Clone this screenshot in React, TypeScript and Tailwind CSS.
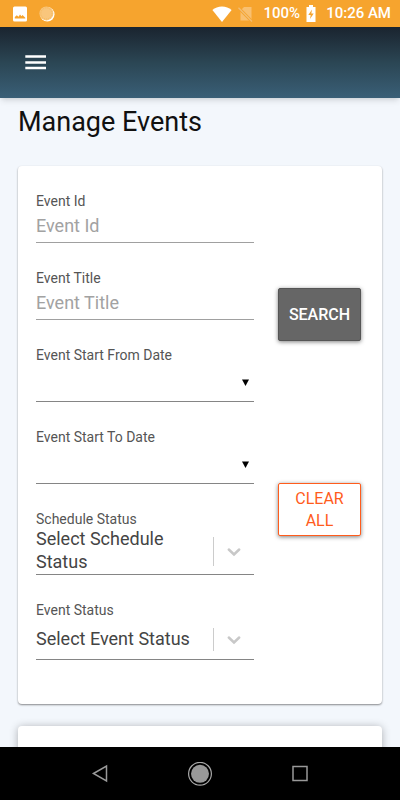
import { ReactNode } from 'react'

interface FieldProps {
  id: string
  label: string
  children: ReactNode
}

function Field({ id, label, children }: FieldProps) {
  return (
    <div className="flex flex-col">
      <label htmlFor={id} className="text-sm leading-4 text-[#555]">
        {label}
      </label>
      {children}
    </div>
  )
}

function TextField({ id, label }: { id: string; label: string }) {
  return (
    <Field id={id} label={label}>
      <input
        id={id}
        type="text"
        placeholder={label}
        className="h-[34px] w-full border-b border-[#a0a0a0] text-lg text-[#333] outline-none placeholder:text-[#a2a2a2]"
      />
    </Field>
  )
}

function DateField({ id, label }: { id: string; label: string }) {
  return (
    <Field id={id} label={label}>
      <div className="relative">
        <input
          id={id}
          type="date"
          className="block h-[39px] w-full border-b border-[#858585] text-lg outline-none [&::-webkit-calendar-picker-indicator]:opacity-0 [&::-webkit-datetime-edit]:opacity-0"
        />
        <svg
          viewBox="0 0 7 7"
          className="pointer-events-none absolute top-4 right-[5px] h-[7px] w-[7px]"
          fill="#000"
          aria-hidden="true"
        >
          <path d="M0 0.5h7L3.5 7z" />
        </svg>
      </div>
    </Field>
  )
}

function SelectField({
  id,
  label,
  placeholder,
}: {
  id: string
  label: string
  placeholder: string
}) {
  return (
    <Field id={id} label={label}>
      <div className="relative flex border-b border-[#858585]">
        <select
          id={id}
          className="min-h-[41px] w-full appearance-none pr-11 pb-px text-lg leading-[23px] whitespace-normal text-[#444] outline-none"
        >
          <option>{placeholder}</option>
        </select>
        <div className="pointer-events-none absolute inset-y-0 right-0 flex items-stretch pt-2.5 pb-2">
          <span className="w-px bg-[#ccc]" />
          <span className="flex w-10 items-center justify-center">
            <svg
              viewBox="0 0 20 20"
              className="h-5 w-5"
              fill="none"
              stroke="#c8c8c8"
              strokeWidth="2.5"
              strokeLinecap="round"
              aria-hidden="true"
            >
              <path d="M4.800 7.500L10 12.500l5.200-5" />
            </svg>
          </span>
        </div>
      </div>
    </Field>
  )
}

function StatusBar() {
  return (
    <div className="flex h-[27px] shrink-0 items-center justify-between bg-[#f6a42e] pr-[9px] pl-3 text-white">
      <div className="flex items-center gap-[11px]">
        <svg viewBox="0 0 16 16" className="h-4 w-4" aria-hidden="true">
          <rect x="1" y="0.500" width="14" height="15" rx="1.5" fill="#fff" />
          <path d="M2.800 12.500V11l2-1.800 1.700 1.600L8 8.500l1.500 1.800 1-1.300 2.800 2.700v0.800z" fill="#f6a42e" />
        </svg>
        <svg viewBox="0 0 16 16" className="h-4 w-4" aria-hidden="true">
          <circle cx="8.3" cy="8.3" r="7.2" fill="#fff" />
          <circle cx="7.4" cy="7.4" r="7" fill="#f9c67c" />
          <circle cx="7.4" cy="7.4" r="5.6" fill="none" stroke="#f6b95e" strokeDasharray="1 1" />
        </svg>
      </div>
      <div className="flex items-center text-[15px] font-medium">
        <svg viewBox="0 0 20 16" className="h-4 w-5" fill="#fff" aria-hidden="true">
          <path d="M10 16L0.4 4.1C3 1.700 6.200 0.500 10 0.500s7 1.200 9.600 3.600z" />
        </svg>
        <svg viewBox="0 0 16 16" className="ml-1.5 h-4 w-4" aria-hidden="true">
          <path d="M6 1h7.500v13.500H2.500V4.500z" fill="#f9c070" />
          <path d="M0.500 1.800L14 15.500" stroke="#f6a42e" strokeWidth="3" />
          <path d="M0.500 1.800L14 15.500" stroke="#f2bd74" strokeWidth="1.300" />
        </svg>
        <span className="ml-2.5">100%</span>
        <svg viewBox="0 0 10 17" className="ml-1.5 h-[17px] w-2.5" aria-hidden="true">
          <path d="M3 0h4v2h2.500v15h-9V2H3z" fill="#fff" />
          <path d="M6 4.500L2.300 10h2.400l-0.700 4L7.700 8.500H5.300z" fill="#f6a42e" />
        </svg>
        <span className="ml-2.5">10:26 AM</span>
      </div>
    </div>
  )
}

function NavigationBar() {
  return (
    <nav className="flex h-[53px] shrink-0 items-center justify-center gap-[76px] bg-black">
      <button type="button" aria-label="Back">
        <svg viewBox="0 0 24 24" className="h-6 w-6" fill="none" stroke="#999" strokeWidth="1.500">
          <path d="M5.500 11.500L18.500 4v15z" />
        </svg>
      </button>
      <button type="button" aria-label="Home">
        <svg viewBox="0 0 24 24" className="h-6 w-6">
          <circle cx="12" cy="11.800" r="11.400" fill="none" stroke="#aaa" strokeWidth="1.200" />
          <circle cx="12" cy="11.800" r="9" fill="#999" />
        </svg>
      </button>
      <button type="button" aria-label="Recent apps">
        <svg viewBox="0 0 24 24" className="h-6 w-6" fill="none" stroke="#999" strokeWidth="1.500">
          <rect x="5" y="4.500" width="14" height="14" />
        </svg>
      </button>
    </nav>
  )
}

export default function App() {
  return (
    <div className="flex h-screen flex-col bg-[#f3f7fc] font-[Roboto,sans-serif]">
      <StatusBar />
      <header className="z-10 flex h-[71px] shrink-0 items-center bg-linear-to-b from-[#1a242f] via-[#2b4654] to-[#3a5f77] px-6 shadow-md">
        <button type="button" aria-label="Open menu">
          <svg viewBox="0 0 24 24" className="h-6 w-6" fill="#fff">
            <path d="M1.300 4.300h20.700v2.500h-20.700zM1.300 10.200h20.700v2.500h-20.700zM1.300 15.800h20.700v2.500h-20.700z" />
          </svg>
        </button>
      </header>

      <main className="flex-1 overflow-hidden px-[18px] pt-1.5">
        <h1 className="text-[27px] leading-9 text-[#111]">Manage Events</h1>

        <form className="mt-[26px] flex gap-6 rounded bg-white pt-[27px] pr-[21px] pb-11 pl-[18px] shadow-[0_1px_2px_rgba(0,0,0,0.45)]">
          <div className="flex min-w-0 flex-1 flex-col gap-[27px]">
            <TextField id="event-id" label="Event Id" />
            <TextField id="event-title" label="Event Title" />
            <DateField id="start-from" label="Event Start From Date" />
            <DateField id="start-to" label="Event Start To Date" />
            <SelectField
              id="schedule-status"
              label="Schedule Status"
              placeholder="Select Schedule Status"
            />
            <SelectField
              id="event-status"
              label="Event Status"
              placeholder="Select Event Status"
            />
          </div>
          <div className="flex w-[83px] flex-col gap-[142px] pt-[95px]">
            <button
              type="button"
              className="h-[53px] rounded-xs border border-[#555] bg-[#666] text-base font-medium text-white shadow-[0_1px_4px_rgba(0,0,0,0.5)]"
            >
              SEARCH
            </button>
            <button
              type="reset"
              className="h-[53px] rounded-xs border border-[#ff5c1c] bg-white px-3 text-base leading-[22px] text-[#ff5c1c] shadow-[0_1px_4px_rgba(0,0,0,0.5)]"
            >
              CLEAR ALL
            </button>
          </div>
        </form>

        <section className="mt-[22px] h-24 rounded bg-white shadow-[0_1px_8px_rgba(0,0,0,0.3)]" />
      </main>

      <NavigationBar />
    </div>
  )
}
